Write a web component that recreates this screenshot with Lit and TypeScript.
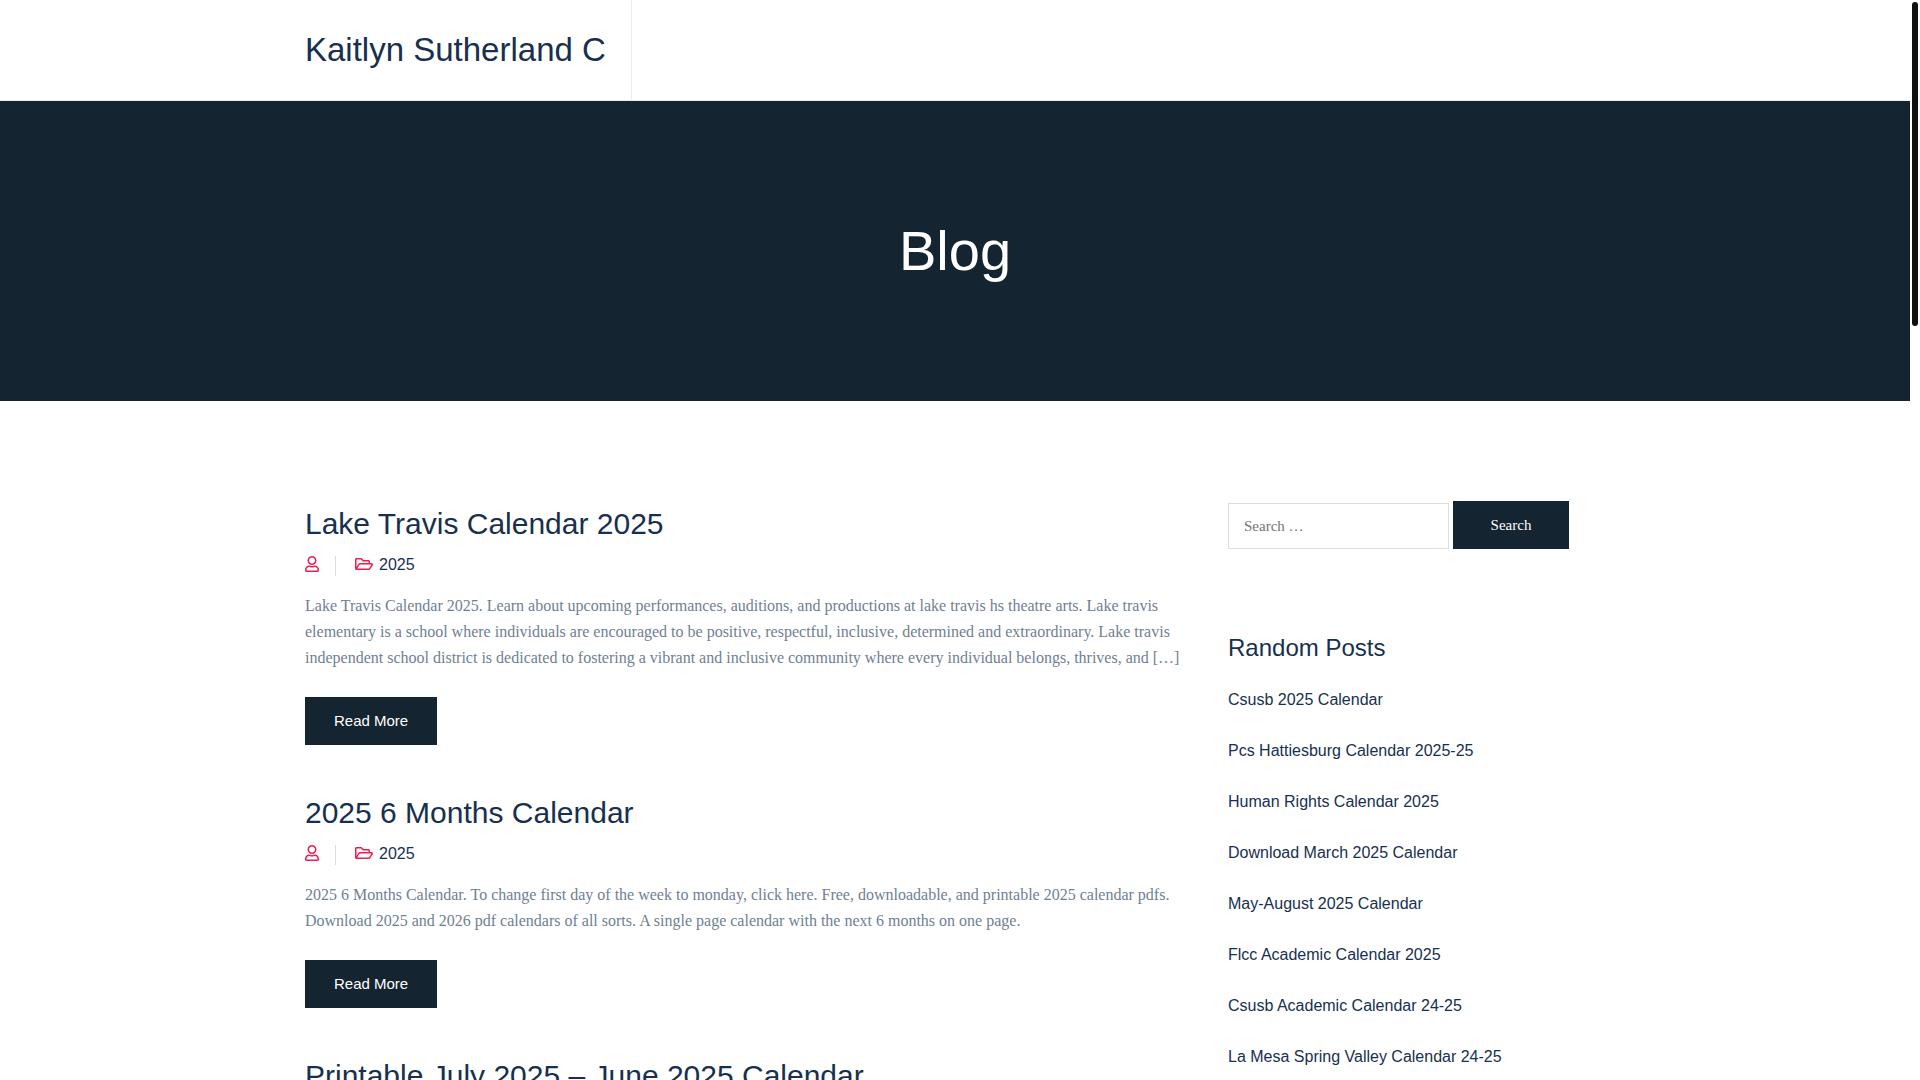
import { LitElement, html, css, svg } from "lit";
import { customElement } from "lit/decorators.js";

interface Post {
  title: string;
  category: string;
  excerpt: string;
}

const posts: Post[] = [
  {
    title: "Lake Travis Calendar 2025",
    category: "2025",
    excerpt:
      "Lake Travis Calendar 2025. Learn about upcoming performances, auditions, and productions at lake travis hs theatre arts. Lake travis elementary is a school where individuals are encouraged to be positive, respectful, inclusive, determined and extraordinary. Lake travis independent school district is dedicated to fostering a vibrant and inclusive community where every individual belongs, thrives, and […]",
  },
  {
    title: "2025 6 Months Calendar",
    category: "2025",
    excerpt:
      "2025 6 Months Calendar. To change first day of the week to monday, click here. Free, downloadable, and printable 2025 calendar pdfs. Download 2025 and 2026 pdf calendars of all sorts. A single page calendar with the next 6 months on one page.",
  },
  {
    title: "Printable July 2025 – June 2025 Calendar",
    category: "",
    excerpt: "",
  },
];

const randomPosts = [
  "Csusb 2025 Calendar",
  "Pcs Hattiesburg Calendar 2025-25",
  "Human Rights Calendar 2025",
  "Download March 2025 Calendar",
  "May-August 2025 Calendar",
  "Flcc Academic Calendar 2025",
  "Csusb Academic Calendar 24-25",
  "La Mesa Spring Valley Calendar 24-25",
];

const userIcon = svg`<path d="M313.6 304c-28.7 0-42.5 16-89.6 16-47.1 0-60.8-16-89.6-16C60.2 304 0 364.2 0 438.4V464c0 26.5 21.5 48 48 48h352c26.5 0 48-21.5 48-48v-25.6c0-74.2-60.2-134.4-134.4-134.4zM400 464H48v-25.6c0-47.6 38.8-86.4 86.4-86.4 14.6 0 38.3 16 89.6 16 51.7 0 74.9-16 89.6-16 47.6 0 86.4 38.8 86.4 86.4V464zM224 288c79.5 0 144-64.5 144-144S303.5 0 224 0 80 64.5 80 144s64.5 144 144 144zm0-240c52.9 0 96 43.1 96 96s-43.1 96-96 96-96-43.1-96-96 43.1-96 96-96z"/>`;
const folderIcon = svg`<path d="M527.9 224H480v-48c0-26.5-21.5-48-48-48H272l-64-64H48C21.5 64 0 85.5 0 112v288c0 26.5 21.5 48 48 48h400c16.5 0 31.9-8.5 40.7-22.6l79.9-128c20-31.9-3-73.4-40.7-73.4zM48 118c0-3.3 2.7-6 6-6h134.1l64 64H426c3.3 0 6 2.7 6 6v42H152c-16.8 0-32.4 8.8-41.1 23.2L48 351.4zm400 282H72l77.2-128H528z"/>`;

@customElement("app-root")
export class AppRoot extends LitElement {
  static styles = css`
    :host {
      display: block;
      height: 100vh;
      overflow: hidden;
      background: #fff;
      color: #6f8093;
      font: 16px/26px "Liberation Serif", "Times New Roman", serif;
    }
    *, *::before, *::after { box-sizing: border-box; }
    h1, h2, h3, p, ul { margin: 0; padding: 0; font-weight: 400; }
    a { color: inherit; text-decoration: none; }
    .page { margin-right: 10px; }
    .container { max-width: 1300px; margin: 0 auto; }
    .header { border-bottom: 1px solid #ededed; }
    .header .container { display: flex; }
    .brand {
      padding: 25px 25px 25px 0;
      border-right: 1px solid #ededed;
      color: #17304f;
      font: 33px/50px "Liberation Sans", Arial, sans-serif;
    }
    .hero {
      padding: 108px 0;
      background: #142430;
      color: #fff;
      text-align: center;
    }
    .hero-title { font: 56px/84px "Liberation Sans", Arial, sans-serif; }
    .content {
      display: grid;
      grid-template-columns: minmax(0, 1fr) 377px;
      gap: 48px;
      padding-top: 100px;
    }
    .posts { display: flex; flex-direction: column; gap: 45px; }
    .post-title {
      margin-bottom: 6px;
      color: #17304f;
      font: 30px/45px "Liberation Sans", Arial, sans-serif;
    }
    .meta {
      display: flex;
      align-items: center;
      margin-bottom: 15px;
      color: #17304f;
      font: 16px/26px "Liberation Sans", Arial, sans-serif;
    }
    .author {
      align-self: flex-end;
      height: 20px;
      margin: 0 19px 2px 0;
      padding-right: 16px;
      border-right: 1px solid #ddd;
    }
    .category { display: flex; align-items: center; gap: 6px; }
    .icon { display: block; height: 16px; margin-bottom: 2px; fill: #ea1e52; }
    .icon-user { width: 14px; }
    .icon-folder { width: 18px; }
    .read-more {
      display: inline-block;
      margin-top: 26px;
      padding: 0 29px;
      background: #142430;
      color: #fff;
      font: 15px/48px "Liberation Sans", Arial, sans-serif;
      vertical-align: top;
    }
    .search { display: flex; align-items: flex-end; gap: 4px; margin-bottom: 81px; }
    .search-input {
      width: 221px;
      height: 46px;
      padding: 0 15px;
      border: 1px solid #ddd;
      border-radius: 0;
      background: #fff;
      color: #6f8093;
      font: 15px/26px "Liberation Serif", serif;
    }
    .search-input::placeholder { color: #757575; }
    .search-button {
      width: 116px;
      height: 48px;
      padding: 0;
      border: 0;
      background: #142430;
      color: #fff;
      font: 15px/26px "Liberation Serif", serif;
    }
    .widget-title {
      margin-bottom: 21px;
      color: #17304f;
      font: 24px/36px "Liberation Sans", Arial, sans-serif;
    }
    .links {
      display: flex;
      flex-direction: column;
      gap: 25px;
      list-style: none;
      color: #17304f;
      font: 16px/26px "Liberation Sans", Arial, sans-serif;
    }
    .scroll-thumb {
      position: fixed;
      top: 2px;
      right: 2px;
      width: 6px;
      height: 30vh;
      border-radius: 3px;
      background: #111;
    }
  `;

  private renderPost(post: Post) {
    return html`
      <article>
        <h2 class="post-title"><a href="#">${post.title}</a></h2>
        ${post.excerpt
          ? html`
              <div class="meta">
                <span class="author">
                  <svg class="icon icon-user" viewBox="0 0 448 512" aria-hidden="true">${userIcon}</svg>
                </span>
                <span class="category">
                  <svg class="icon icon-folder" viewBox="0 0 576 512" aria-hidden="true">${folderIcon}</svg>
                  <a href="#">${post.category}</a>
                </span>
              </div>
              <p>${post.excerpt}</p>
              <a class="read-more" href="#">Read More</a>
            `
          : ""}
      </article>
    `;
  }

  render() {
    return html`
      <div class="page">
        <header class="header">
          <div class="container"><a class="brand" href="#">Kaitlyn Sutherland C</a></div>
        </header>
        <section class="hero"><h1 class="hero-title">Blog</h1></section>
        <div class="container content">
          <main class="posts">${posts.map((post) => this.renderPost(post))}</main>
          <aside>
            <form class="search" role="search" @submit=${(e: Event) => e.preventDefault()}>
              <label>
                <input class="search-input" type="search" placeholder="Search …" aria-label="Search" />
              </label>
              <button class="search-button" type="submit">Search</button>
            </form>
            <h3 class="widget-title">Random Posts</h3>
            <ul class="links">
              ${randomPosts.map((title) => html`<li><a href="#">${title}</a></li>`)}
            </ul>
          </aside>
        </div>
      </div>
      <div class="scroll-thumb"></div>
    `;
  }
}
